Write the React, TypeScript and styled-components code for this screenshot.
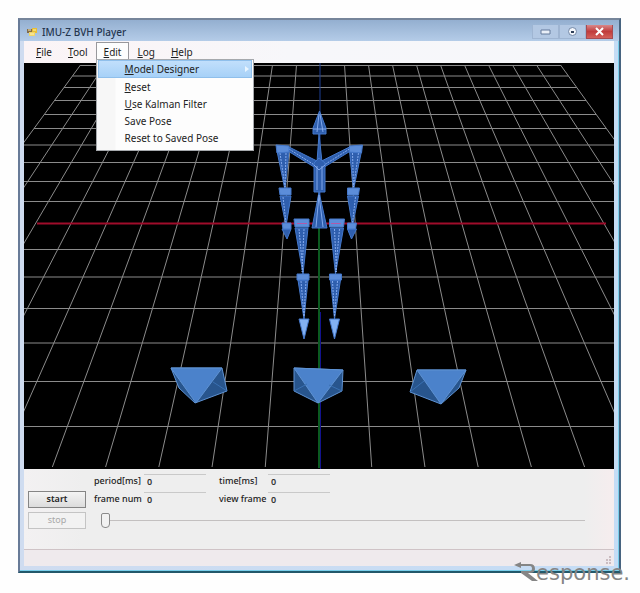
import React from "react";
import styled, { createGlobalStyle, css } from "styled-components";

const GlobalStyle = createGlobalStyle`
  * { box-sizing: border-box; }
  body { margin: 0; background: #fefefe; font-family: "Noto Sans", sans-serif; }
`;

const Page = styled.div`
  position: relative;
  padding: 18px 19px 20px 18px;
`;

const Frame = styled.main`
  border: 2px solid #47637f;
  border-top-color: #76859a;
  border-left-color: #687b98;
  border-bottom-color: #22586a;
  box-shadow: inset -1px -1px 0 #79cfec;
  background: linear-gradient(90deg, #cfdcf0, #c4dcf5);
  padding: 0 5px 5px 4px;
`;

const TitleBar = styled.header`
  display: flex;
  align-items: center;
  gap: 4px;
  height: 21px;
  margin: 0 -5px 0 -4px;
  padding: 3px 6px 0 7px;
  background: linear-gradient(#94afd0, #b4cce8);
`;

const Title = styled.h1`
  flex: 1;
  margin: 0;
  font-size: 10px;
  line-height: 14px;
  font-weight: 500;
  color: #25364f;
`;

const WindowButtons = styled.div`
  display: flex;
`;

const WindowButton = styled.button<{ $close?: boolean }>`
  display: grid;
  place-items: center;
  width: 27px;
  height: 14px;
  padding: 0;
  border: 1px solid #9fb5d2;
  border-top: 0;
  background: #b3c8e3;
  ${(p) =>
    p.$close &&
    css`
      border-color: #a64b52;
      background: linear-gradient(#d9888a, #c03c3c 50%, #d4605a);
    `}
`;

const MenuBar = styled.nav`
  display: flex;
  height: 22px;
  padding: 1px 0 0 4px;
  background: linear-gradient(90deg, #fbf4f6, #f7f7fa 45%, #f6f7fa);
`;

const MenuSlot = styled.div`
  position: relative;
  display: flex;
`;

const MenuButton = styled.button<{ $open?: boolean }>`
  padding: 0 7px 2px;
  border: 1px solid ${(p) => (p.$open ? "#98989c" : "transparent")};
  border-bottom: 0;
  background: ${(p) => (p.$open ? "#fdfdfd" : "transparent")};
  font: 10px/18px "Noto Sans", sans-serif;
  color: #1c1c1c;
`;

const Dropdown = styled.div`
  position: absolute;
  z-index: 2;
  top: 17px;
  left: 0;
  width: 158px;
  padding: 0 1px 4px;
  border: 1px solid #a6a9ad;
  background: linear-gradient(90deg, #f7f7f7 18px, #fdfdfd 19px);
`;

const DropItem = styled.button<{ $active?: boolean }>`
  display: flex;
  align-items: center;
  justify-content: space-between;
  width: 100%;
  height: ${(p) => (p.$active ? 18 : 17)}px;
  padding: 0 3px 0 27px;
  border: 0;
  background: ${(p) => (p.$active ? "linear-gradient(#c3e0fc, #a5d0f7)" : "transparent")};
  box-shadow: ${(p) => (p.$active ? "inset 0 0 0 1px #8fbfeb" : "none")};
  font: 10px/16px "Noto Sans", sans-serif;
  color: #222;
  text-align: left;
`;

const Scene = styled.svg`
  display: block;
  width: 100%;
  background: #000;
`;

const Controls = styled.section`
  display: grid;
  grid-template-columns: 66px 50px 75px 49px 62px 1fr;
  grid-template-rows: 18px 18px 24px;
  align-items: center;
  padding: 3px 4px 17px;
  background: linear-gradient(90deg, #f3f1f2, #eee 10%, #eee 95%, #f6edee);
`;

const PushButton = styled.button`
  grid-column: 1;
  width: 58px;
  height: 17px;
  padding: 0;
  border: 1px solid #858585;
  background: linear-gradient(#f4f4f4, #dcdcdc);
  font: 9px/14px "Noto Sans", sans-serif;
  font-weight: 600;
  color: #222;
  &:disabled {
    border-color: #c4c4c4;
    background: #f2f2f2;
    color: #a8a8a8;
    font-weight: 400;
  }
`;

const FieldLabel = styled.label<{ $column: number }>`
  grid-column: ${(p) => p.$column};
  font: 9px/14px "Noto Sans", sans-serif;
  font-weight: 500;
  color: #222;
  white-space: nowrap;
`;

const Field = styled.input`
  width: 62px;
  height: 15px;
  padding: 0 3px;
  border: 0;
  border-top: 1px solid #c9c9c9;
  background: transparent;
  font: 9px/14px "Noto Sans", sans-serif;
  font-weight: 600;
  color: #333;
`;

const Slider = styled.input`
  grid-column: 2 / -1;
  appearance: none;
  height: 16px;
  margin: 0 25px 0 7px;
  background: linear-gradient(#c3c0c0, #c3c0c0) center / 100% 1px no-repeat;
  &::-webkit-slider-thumb {
    appearance: none;
    width: 9px;
    height: 15px;
    border: 1px solid #8a8a8a;
    border-radius: 2px 2px 4px 4px;
    background: #f1f1f1;
  }
`;

const StatusBar = styled.footer`
  display: flex;
  justify-content: flex-end;
  align-items: flex-end;
  height: 17px;
  padding: 0 2px 2px;
  border-top: 1px solid #cfc3c6;
  background: #efeaed;
`;

const Watermark = styled.div`
  position: absolute;
  right: 10px;
  bottom: 8px;
  display: flex;
  align-items: flex-end;
  color: #858585;
  font: 21px/24px "DejaVu Sans", sans-serif;
`;

const WatermarkMark = styled.svg`
  width: 25px;
  height: 20px;
  margin: 0 -3px 3px 0;
`;

const rows = [65.5, 76, 87.5, 100.5, 114.5, 128.5, 145, 162.5, 181.5, 201.5, 249.5, 277, 308.5, 343, 381.5, 426.5];
const columns = Array.from({ length: 21 }, (_, i) => i - 10);
const middle = (y: number) => 320.5 - (y - 65) * 0.005;
const spread = (y: number) => 24 + (y - 65) * 0.0727;
const gridX = (k: number, y: number) => middle(y) + k * spread(y);

// The arm and leg on one side of the body; the other side is its reflection.
const Limbs = () => (
  <>
    <path d="M277 151H289L285 190Z M280 196H291L286 226Z M282 229H291L287 239Z" />
    <path d="M295 228H308L303 274Z M298 280H308L304 319Z" />
    <path d="M289 147L319 162V170L288 151Z" />
    <path d="M289 149L316 166M280 153L285 187M286 153L285 187M283 197L286 223M299 229L303 272M304 229L302 272M301 281L304 316M306 281L304 316" fill="none" stroke="#86acef" strokeDasharray="2 1" />
    <g fill="#5c8dd9">
      <path d="M276 145L289 146V152L277 153Z M279 188H291V195H280Z M282 223H291V229H283Z" />
      <path d="M294 219H309V227H295Z M297 274H309V280H297Z" />
    </g>
    <path d="M299 319H309L304 339Z" fill="#83b1f2" />
  </>
);

const World = () => (
  <Scene viewBox="24 63 590 406" role="img" aria-label="Skeleton on a floor grid">
    <g stroke="#8b8b8b" strokeWidth="1" fill="none">
      {rows.map((y) => (
        <path key={y} d={`M${gridX(-10, y)} ${y}H${gridX(10, y)}`} />
      ))}
      {columns.filter((k) => k !== 0).map((k) => (
        <path key={k} d={`M${gridX(k, 65)} 65L${gridX(k, 467)} 467`} />
      ))}
    </g>
    <path d="M37 223.500H606" stroke="#a00c2b" strokeWidth="2" />
    <path d="M320 63V220" stroke="#1d3f94" strokeWidth="1" />
    <path d="M319 225V468" stroke="#0b5a20" strokeWidth="2" />
    <path d="M320.500 312V469" stroke="#12128e" strokeWidth="1" />

    <g fill="#2f5fae" stroke="#4478cb" strokeWidth="1" strokeLinejoin="round">
      <Limbs />
      <g transform="translate(638.500 0) scale(-1 1)">
        <Limbs />
      </g>
      <path d="M319 134L322 162H317Z" />
      <path d="M314 163L319 158L325 163V192H314Z" />
      <path d="M319 192L327 228H312Z" />
      <path d="M319.500 111L326 128V134H313V128Z" />
      <path d="M317 166V190M322 166V190M314 165L319 170L325 165M319 195L316 227M319 195L323 227M313 129H326M319 114L317 132M320 114L323 132" fill="none" stroke="#82a9ec" />
    </g>
    <path d="M297 223.500H307M331 223.500H341" stroke="#b259a8" />

    <g stroke="#5e92d3" strokeWidth="1" strokeLinejoin="round">
      <path d="M171 368L179 388L195 403L227 391L222 368Z" fill="#28558d" />
      <path d="M171 368H222L196 403Z" fill="#4b82cb" />
      <path d="M213 382L227 391" fill="none" stroke="#3970b2" />
      <path d="M294 368V391L318 403L342 391L343 370Z" fill="#28558d" />
      <path d="M294 368L343 370L318 403Z" fill="#4b82cb" />
      <path d="M307 384L294 391M329 385L342 391" fill="none" stroke="#3970b2" />
      <path d="M417 370L410 392L441 404L459 388L466 370Z" fill="#28558d" />
      <path d="M417 370H466L441 404Z" fill="#4b82cb" />
      <path d="M424 381L410 392" fill="none" stroke="#3970b2" />
    </g>
  </Scene>
);

const menus = ["File", "Tool", "Edit", "Log", "Help"];
const editItems = [
  { text: "Model Designer", key: true },
  { text: "Reset", key: true },
  { text: "Use Kalman Filter", key: true },
  { text: "Save Pose", key: false },
  { text: "Reset to Saved Pose", key: false },
];

const Accel = ({ text }: { text: string }) => (
  <span>
    <u>{text[0]}</u>
    {text.slice(1)}
  </span>
);

export default function App() {
  return (
    <Page>
      <GlobalStyle />
      <Frame>
        <TitleBar>
          <svg width="11" height="10" viewBox="0 0 11 10" aria-hidden="true">
            <path d="M0 2H5V6H0Z" fill="#826c4c" />
            <path d="M5 1H10V6H5Z" fill="#e7be35" />
            <path d="M2 5H8V9H2Z" fill="#f0d66a" />
            <path d="M1 3H4M6 3H9M3 7H7" stroke="#fff1b4" />
          </svg>
          <Title>IMU-Z BVH Player</Title>
          <WindowButtons>
            <WindowButton aria-label="Minimize">
              <svg width="11" height="7" viewBox="0 0 11 7"><path d="M1 2H10V6H1Z" fill="#e9eff8" stroke="#647b9c" /></svg>
            </WindowButton>
            <WindowButton aria-label="Maximize">
              <svg width="11" height="11" viewBox="0 0 11 11"><circle cx="5.500" cy="5.500" r="4" fill="#f3f6fb" stroke="#7389a8" /><path d="M4 5H7V7H4Z" fill="#2e3f59" /></svg>
            </WindowButton>
            <WindowButton $close aria-label="Close">
              <svg width="11" height="9" viewBox="0 0 11 9"><path d="M2 1L9 8M9 1L2 8" stroke="#fff" strokeWidth="2" /></svg>
            </WindowButton>
          </WindowButtons>
        </TitleBar>

        <MenuBar>
          {menus.map((name) => (
            <MenuSlot key={name}>
              <MenuButton $open={name === "Edit"} aria-haspopup="menu">
                <Accel text={name} />
              </MenuButton>
              {name === "Edit" && (
                <Dropdown role="menu">
                  {editItems.map((item, i) => (
                    <DropItem key={item.text} role="menuitem" $active={i === 0}>
                      {item.key ? <Accel text={item.text} /> : item.text}
                      {i === 0 && (
                        <svg width="4" height="6" viewBox="0 0 4 6" aria-hidden="true"><path d="M0 0L4 3L0 6Z" fill="#e9f5ff" /></svg>
                      )}
                    </DropItem>
                  ))}
                </Dropdown>
              )}
            </MenuSlot>
          ))}
        </MenuBar>

        <World />

        <Controls>
          <FieldLabel $column={2} htmlFor="period">period[ms]</FieldLabel>
          <Field id="period" defaultValue="0" />
          <FieldLabel $column={4} htmlFor="time">time[ms]</FieldLabel>
          <Field id="time" defaultValue="0" />
          <PushButton>start</PushButton>
          <FieldLabel $column={2} htmlFor="frames">frame num</FieldLabel>
          <Field id="frames" defaultValue="0" />
          <FieldLabel $column={4} htmlFor="view">view frame</FieldLabel>
          <Field id="view" defaultValue="0" />
          <PushButton disabled>stop</PushButton>
          <Slider type="range" min="0" max="100" defaultValue="0" aria-label="Frame position" />
        </Controls>
        <StatusBar>
          <svg width="8" height="8" viewBox="0 0 8 8" aria-hidden="true">
            <path d="M5 0H7V2H5Z M5 3H7V5H5Z M2 3H4V5H2Z M5 6H7V8H5Z M2 6H4V8H2Z" fill="#cbbcc0" />
          </svg>
        </StatusBar>
      </Frame>
      <Watermark>
        <WatermarkMark viewBox="0 0 25 20" aria-label="R">
          <path d="M0 3L7 0V2H16Q21 2 21 7Q21 11 16 11H14L24 19H18L7 11V9H16Q18 9 18 7Q18 4 16 4H7V6Z" fill="#858585" />
        </WatermarkMark>
        esponse.
      </Watermark>
    </Page>
  );
}
